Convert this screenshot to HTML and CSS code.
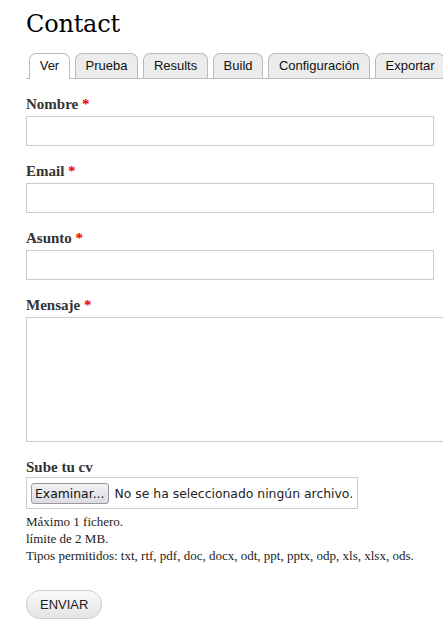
FILE: index.html
```html
<!DOCTYPE html>
<html lang="es">
<head>
<meta charset="utf-8">
<title>Contact</title>
<link rel="stylesheet" href="styles.css">
</head>
<body>
<div class="page">
  <h1 class="title">Contact</h1>
  <ul class="tabs">
    <li class="tab active">Ver</li>
    <li class="tab">Prueba</li>
    <li class="tab">Results</li>
    <li class="tab">Build</li>
    <li class="tab">Configuración</li>
    <li class="tab">Exportar</li>
  </ul>
  <form class="form">
    <div class="field">
      <label class="label">Nombre <span class="req">*</span></label>
      <input class="text" type="text">
    </div>
    <div class="field">
      <label class="label">Email <span class="req">*</span></label>
      <input class="text" type="text">
    </div>
    <div class="field">
      <label class="label">Asunto <span class="req">*</span></label>
      <input class="text" type="text">
    </div>
    <div class="field">
      <label class="label">Mensaje <span class="req">*</span></label>
      <div class="area"></div>
    </div>
    <div class="field file-field">
      <label class="label">Sube tu cv</label>
      <div class="file">
        <span class="browse">Examinar...</span>
        <span class="nofile">No se ha seleccionado ningún archivo.</span>
      </div>
      <div class="desc">
        <div>Máximo 1 fichero.</div>
        <div>límite de 2 MB.</div>
        <div>Tipos permitidos: txt, rtf, pdf, doc, docx, odt, ppt, pptx, odp, xls, xlsx, ods.</div>
      </div>
    </div>
    <div class="actions">
      <span class="submit">ENVIAR</span>
    </div>
  </form>
</div>
</body>
</html>
```
FILE: styles.css
```css
html, body {
  margin: 0;
  padding: 0;
  background: #fff;
  overflow: hidden;
}
.page {
  padding: 6px 0 0 26px;
  font-family: "Liberation Serif", "DejaVu Serif", serif;
  color: #333;
}
.title {
  margin: 0;
  font-family: "DejaVu Serif", serif;
  font-weight: normal;
  font-size: 24px;
  line-height: 36px;
  color: #000;
  letter-spacing: -0.2px;
}
.tabs {
  list-style: none;
  margin: 11px 0 0 0;
  padding: 0 0 0 3px;
  display: flex;
  gap: 5px;
  border-bottom: 1px solid #bbb;
  height: 25px;
  white-space: nowrap;
}
.tab {
  flex: none;
  box-sizing: border-box;
  height: 25px;
  padding: 0 9.7px;
  border: 1px solid #bbb;
  border-bottom: none;
  border-radius: 7px 7px 0 0;
  background: #ececec;
  font-family: "Liberation Sans", Arial, sans-serif;
  font-size: 13px;
  line-height: 24px;
  color: #111;
}
.tab.active {
  background: #fff;
  height: 26px;
}
.form {
  margin-top: 16px;
}
.field {
  margin-bottom: 16px;
}
.label {
  display: block;
  font-weight: bold;
  font-size: 15px;
  line-height: 18px;
  margin-bottom: 3px;
  color: #333;
}
.req {
  color: #e00;
}
.text {
  display: block;
  box-sizing: border-box;
  width: 408px;
  height: 30px;
  margin: 0;
  border: 1px solid #ccc;
  background: #fff;
}
.area {
  box-sizing: border-box;
  width: 430px;
  height: 125px;
  border: 1px solid #ccc;
  border-right: none;
}
.file-field {
  margin-bottom: 0;
}
.file-field .label {
  margin-bottom: 1px;
}
.file {
  display: inline-flex;
  align-items: center;
  box-sizing: border-box;
  height: 32px;
  padding: 0 4px;
  border: 1px solid #ccc;
  gap: 6px;
  font-family: "DejaVu Sans", sans-serif;
  font-size: 12.4px;
  color: #222;
}
.browse {
  box-sizing: border-box;
  height: 21px;
  padding: 0 3px;
  border: 1px solid #999;
  border-radius: 3px;
  background: linear-gradient(#f0f0f4, #dcdce2);
  line-height: 19px;
  color: #111;
}
.desc {
  margin-top: 4px;
  font-size: 13px;
  line-height: 17px;
  color: #222;
}
.actions {
  margin-top: 26px;
}
.submit {
  display: inline-block;
  box-sizing: border-box;
  height: 29px;
  padding: 0 13px;
  border: 1px solid #ccc;
  border-radius: 14px;
  background: linear-gradient(#fafafa, #e4e4e4);
  font-family: "Liberation Sans", Arial, sans-serif;
  font-size: 13px;
  line-height: 27px;
  color: #222;
}
```
